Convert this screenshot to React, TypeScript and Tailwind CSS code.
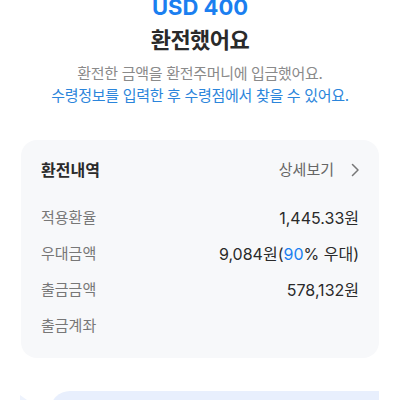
export default function App() {
  const rows = [
    { label: "적용환율", value: <>1,445.33원</> },
    {
      label: "우대금액",
      value: (
        <>
          9,084원(<span className="text-[#1b7ff0]">90</span>% 우대)
        </>
      ),
    },
    { label: "출금금액", value: <>578,132원</> },
    { label: "출금계좌", value: null },
  ];

  return (
    <div
      className="w-[400px] h-[400px] overflow-hidden bg-white"
      style={{ fontFamily: "Inter, 'Noto Sans CJK KR', sans-serif" }}
    >
      <div className="-mt-[7px] flex flex-col items-center">
        <div className="h-[28px] leading-[28px] text-[22px] font-bold text-[#1b7ff0]">
          USD 400
        </div>
        <div className="mt-[4px] h-[30px] leading-[30px] text-[22px] font-semibold text-[#2a2a2a] tracking-[-0.5px]">
          환전했어요
        </div>
        <div className="mt-[8px] h-[22px] leading-[22px] text-[15px] text-[#8a8a8a] tracking-[-0.3px]">
          환전한 금액을 환전주머니에 입금했어요.
        </div>
        <div className="h-[22px] leading-[22px] text-[15px] text-[#2b85db] tracking-[-0.3px]">
          수령정보를 입력한 후 수령점에서 찾을 수 있어요.
        </div>
      </div>

      <div className="mx-[21px] mt-[33px] rounded-[16px] bg-[#f7f8fa] px-[20px] pb-[14px]">
        <div className="h-[60px] flex items-center justify-between">
          <span className="text-[16px] font-semibold text-[#2a2a2a]">환전내역</span>
          <span className="flex items-center gap-[16px] text-[15px] text-[#666]">
            상세보기
            <svg width="9" height="14" viewBox="0 0 9 14" fill="none">
              <polyline
                points="2.5,1.5 8,7 2.5,12.5"
                stroke="#777"
                strokeWidth="1.5"
                strokeLinecap="round"
                strokeLinejoin="round"
              />
            </svg>
          </span>
        </div>
        <div>
          {rows.map((r) => (
            <div key={r.label} className="h-[36px] flex items-center justify-between">
              <span className="text-[15px] text-[#777]">{r.label}</span>
              <span className="text-[16px] text-[#2a2a2a]">{r.value}</span>
            </div>
          ))}
        </div>
      </div>

      <div className="relative mt-[33px] h-[20px] mx-[17px]">
        <svg className="absolute left-[3px] top-[4px]" width="20" height="16" viewBox="0 0 20 16">
          <path d="M0 0 L14 10 L14 16 L0 16 Z" fill="#eef3fd" />
        </svg>
        <div className="absolute left-[33px] right-[4px] top-[0px] h-[20px] rounded-tl-[20px] bg-[#e8effd]" />
      </div>
    </div>
  );
}
